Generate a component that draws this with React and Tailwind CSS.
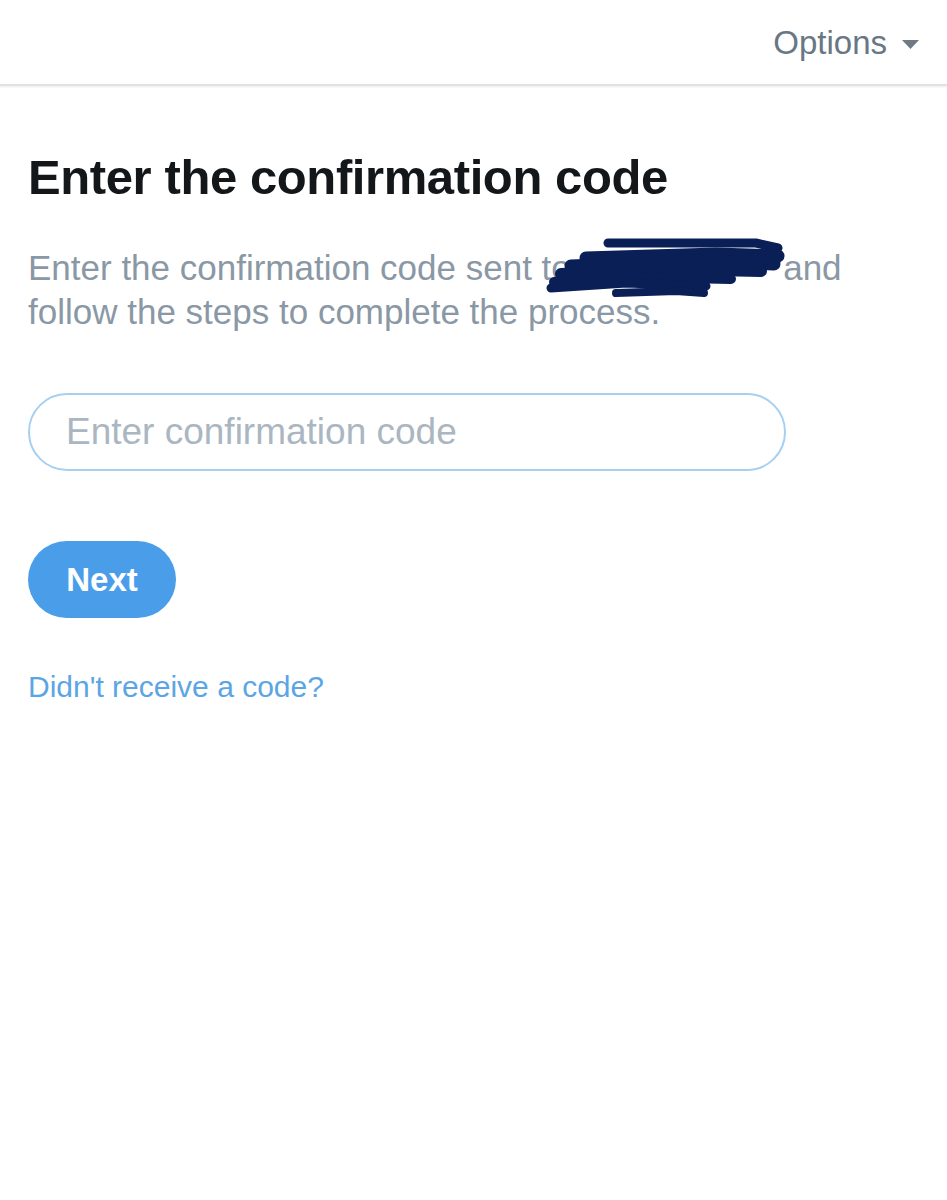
import React from "react";

const font = { fontFamily: '"Liberation Sans", Arial, sans-serif' };

// redaction marker drawn over the phone number
const Scribble = () => (
  <svg
    className="absolute left-[-65px] top-[-18px] pointer-events-none"
    width="275"
    height="76"
    viewBox="0 0 275 76"
    fill="none"
    stroke="#0a1f56"
    strokeLinecap="round"
    strokeLinejoin="round"
  >
    <path d="M92 15 L240 15 L262 20" strokeWidth="9" />
    <path d="M70 30 L200 26 L262 28" strokeWidth="13" />
    <path d="M55 38 L180 33 L258 36" strokeWidth="13" />
    <path d="M45 46 L150 41 L245 43" strokeWidth="12" />
    <path d="M38 54 L120 49 L215 51" strokeWidth="10" />
    <path d="M35 60 L110 55 L190 58" strokeWidth="9" />
    <path d="M100 65 L160 63 L188 65" strokeWidth="8" />
  </svg>
);

export default function App() {
  return (
    <div className="min-h-[1200px] bg-white" style={font}>
      <header className="h-[86px] flex items-center justify-end pr-[28px] border-b-2 border-[#dfe1e3] shadow-[0_1px_2px_rgba(0,0,0,0.08)]">
        <button className="flex items-center gap-[15px] text-[33px] text-[#677785] leading-none">
          <span>Options</span>
          <svg width="17" height="9" viewBox="0 0 17 9" className="mt-[4px]">
            <path d="M0 0 H17 L8.5 9 Z" fill="#6e7b86" />
          </svg>
        </button>
      </header>

      <main className="px-[28px]">
        <h1 className="mt-[63px] text-[49px] leading-[56px] font-bold text-[#14171a] tracking-[-0.4px]">
          Enter the confirmation code
        </h1>

        <p className="mt-[41px] text-[35px] leading-[44px] text-[#8a98a5]">
          Enter the confirmation code sent to{" "}
          <span className="relative inline-block mr-[11px]">
            +1 ***-***-**
            <Scribble />
          </span>{" "}
          and
          <br />
          follow the steps to complete the process.
        </p>

        <div className="mt-[59px] w-[758px] h-[78px] rounded-full border-2 border-[#a6d0f1] flex items-center px-[36px]">
          <input
            className="w-full bg-transparent outline-none text-[37px] text-[#14171a] placeholder:text-[#aab6c1]"
            placeholder="Enter confirmation code"
            style={font}
          />
        </div>

        <button className="mt-[70px] h-[77px] w-[148px] rounded-full bg-[#4a9ee9] text-white text-[33px] font-bold">
          Next
        </button>

        <div className="mt-[51px] leading-[36px]">
          <a href="#" className="text-[30px] text-[#5ba5e5]">
            Didn't receive a code?
          </a>
        </div>
      </main>
    </div>
  );
}
